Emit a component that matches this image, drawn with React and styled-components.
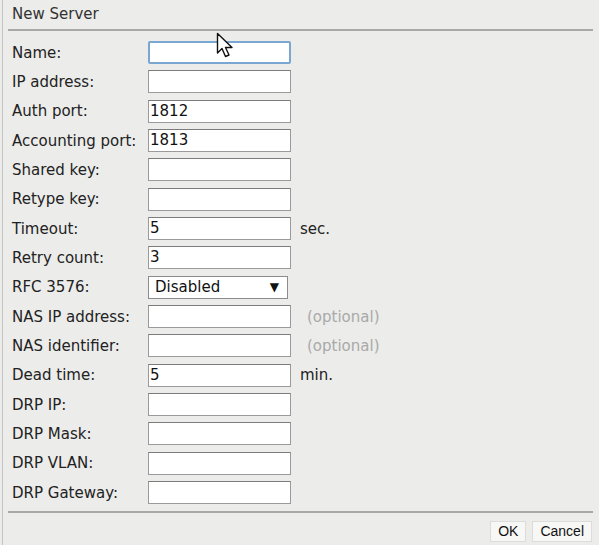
import React from 'react';
import styled, { createGlobalStyle } from 'styled-components';

const GlobalStyle = createGlobalStyle`
  html, body {
    margin: 0;
    padding: 0;
    background: #ececea;
  }
  * {
    box-sizing: border-box;
  }
`;

function Cursor() {
  return (
    <CursorWrap>
      <svg width="20" height="28" viewBox="0 0 20 28">
        <path
          d="M1.5 1.5 L1.5 21 L6 16.5 L9.5 24.5 L13 23 L9.5 15.5 L16 15.5 Z"
          fill="#ffffff"
          stroke="#111111"
          strokeWidth="1.4"
          strokeLinejoin="round"
        />
      </svg>
    </CursorWrap>
  );
}

function App() {
  return (
    <>
      <GlobalStyle />
      <Page>
        <Dialog>
          <Title>New Server</Title>
          <Rule />
          <Form>
            {FIELDS.map(({ id, label, value, note, kind, focus }) => (
              <Row key={id}>
                <Label>{label}</Label>
                {kind === 'select' ? (
                  <Select>
                    <span>{value}</span>
                    <Arrow>▼</Arrow>
                  </Select>
                ) : (
                  <Input focus={focus}>{value}</Input>
                )}
                {note && <Note optional={note.startsWith('(')}>{note}</Note>}
              </Row>
            ))}
          </Form>
          <Rule bottom />
          <Footer>
            <Button>OK</Button>
            <Button>Cancel</Button>
          </Footer>
          <Cursor />
        </Dialog>
      </Page>
    </>
  );
}

const Page = styled.div`
  width: 599px;
  height: 545px;
  padding-left: 2px;
  overflow: hidden;
`;

const Dialog = styled.div`
  position: relative;
  height: 100%;
  border-left: 1px solid #c4c4c2;
  padding-left: 5px;
  font-family: 'DejaVu Sans', Verdana, sans-serif;
  font-size: 15px;
  color: #222;
`;

const Title = styled.div`
  height: 29px;
  padding: 5px 0 0 4px;
  font-size: 15px;
  color: #333;
`;

const Rule = styled.div`
  height: 2px;
  margin-right: 6px;
  margin-top: ${p => (p.bottom ? '4px' : '0')};
  background: #a8a8a6;
`;

const Form = styled.div`
  padding-top: 7px;
  padding-left: 4px;
`;

const Row = styled.div`
  display: flex;
  align-items: center;
  height: 29.33px;
`;

const Label = styled.div`
  width: 136px;
  flex-shrink: 0;
  white-space: nowrap;
  overflow: visible;
`;

const Input = styled.div`
  width: 143px;
  height: 23px;
  padding: 1px 1px 0;
  line-height: 19px;
  background: #fff;
  border: ${p => (p.focus ? '2px solid #7aa6d2' : '1px solid #9a9a9a')};
  border-top-color: ${p => (p.focus ? '#7aa6d2' : '#7c7c7c')};
  border-radius: ${p => (p.focus ? '2px' : '0')};
  color: #111;
`;

const Select = styled.div`
  display: flex;
  align-items: center;
  justify-content: space-between;
  width: 140px;
  height: 23px;
  padding: 0 8px 0 6px;
  background: #fff;
  border: 1px solid #8c8c8c;
  color: #111;
`;

const Arrow = styled.span`
  font-size: 12px;
  color: #111;
`;

const Note = styled.span`
  margin-left: ${p => (p.optional ? '16px' : '9px')};
  color: ${p => (p.optional ? '#a9a9a9' : '#222')};
`;

const Footer = styled.div`
  display: flex;
  justify-content: flex-end;
  gap: 6px;
  padding: 8px 7px 0 0;
`;

const Button = styled.div`
  height: 21px;
  padding: 1px 7px 0;
  background: #f7f7f6;
  border: 1px solid #dcdcda;
  font-family: 'Liberation Sans', Arial, sans-serif;
  font-size: 14px;
  color: #111;
`;

const CursorWrap = styled.div`
  position: absolute;
  left: 213px;
  top: 32px;
`;

const FIELDS = [
  { id: 1, label: 'Name:', value: '', focus: true },
  { id: 2, label: 'IP address:', value: '' },
  { id: 3, label: 'Auth port:', value: '1812' },
  { id: 4, label: 'Accounting port:', value: '1813' },
  { id: 5, label: 'Shared key:', value: '' },
  { id: 6, label: 'Retype key:', value: '' },
  { id: 7, label: 'Timeout:', value: '5', note: 'sec.' },
  { id: 8, label: 'Retry count:', value: '3' },
  { id: 9, label: 'RFC 3576:', value: 'Disabled', kind: 'select' },
  { id: 10, label: 'NAS IP address:', value: '', note: '(optional)' },
  { id: 11, label: 'NAS identifier:', value: '', note: '(optional)' },
  { id: 12, label: 'Dead time:', value: '5', note: 'min.' },
  { id: 13, label: 'DRP IP:', value: '' },
  { id: 14, label: 'DRP Mask:', value: '' },
  { id: 15, label: 'DRP VLAN:', value: '' },
  { id: 16, label: 'DRP Gateway:', value: '' },
];

export default App;
